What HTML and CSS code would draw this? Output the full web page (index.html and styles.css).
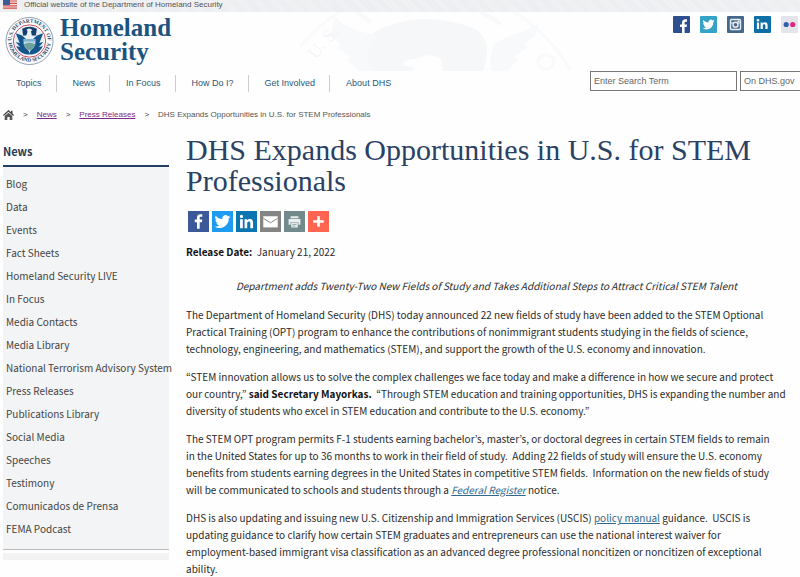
FILE: index.html
```
<!DOCTYPE html>
<html lang="en">
<head>
    <meta charset="UTF-8">
    <meta name="viewport" content="width=device-width, initial-scale=1.0">
    <title>DHS Expands Opportunities in U.S. for STEM Professionals</title>
    <link rel="stylesheet" href="styles.css">
</head>
<body>

<div class="gov-banner">
    <svg class="flag" viewBox="0 0 14 10">
        <rect width="14" height="10" fill="#f3e3e3"/>
        <path d="M0 1h14M0 3.4h14M0 5.8h14M0 8.2h14" stroke="#d4504f" stroke-width="1.2"/>
        <rect width="7" height="5" fill="#3c5a96"/>
    </svg>
    <span>Official website of the Department of Homeland Security</span>
</div>

<header class="header">
    <svg class="watermark" viewBox="0 0 280 59">
        <circle cx="127" cy="140" r="165" fill="none" stroke="#f9fafc" stroke-width="3"/>
        <path d="M71 59C60 42 64 25 80 17q46-20 95 0c13 8 15 22 8 42h-40c-1-6-2-8-1-11-10-8-20-4-25-1-8 0-14 2-14 6l11 3-2 3z" fill="#f5f7f9"/>
        <path d="M35 5c10 11 24 14 42 19l-6 8c-5 9-4 18 3 27H60l-12-10 2-5-12-8 3-4-13-10 4-3z" fill="#f7f9fb"/>
        <path d="M238 12c-12 8-30 11-43 19-5 9-5 19-4 28h17l9-11-2-4 12-8-2-4 11-9z" fill="#f7f9fb"/>
        <path d="M56 0l15 10M181 0l20 12" stroke="#f8f9fa" stroke-width="4"/>
        <text x="16" y="48" transform="rotate(-50 16 48)" class="watermark-text">U. S.</text>
        <ellipse cx="246" cy="50" rx="8" ry="7" fill="none" stroke="#f8f9fb" stroke-width="3"/>
    </svg>

    <div class="header-top">
        <a href="#" class="brand">
            <svg class="seal" viewBox="0 0 100 100">
                <defs>
                    <path id="ringTop" d="M14.500 60A37 37 0 1 1 85.500 60"/>
                    <path id="ringBottom" d="M7.500 58A43.500 43.500 0 0 0 92.500 58"/>
                </defs>
                <circle cx="50" cy="50" r="48" fill="#fff" stroke="#8a9bb0" stroke-width="2"/>
                <text class="seal-text"><textPath href="#ringTop" startOffset="50%" text-anchor="middle">U.S. DEPARTMENT OF</textPath></text>
                <text class="seal-text"><textPath href="#ringBottom" startOffset="50%" text-anchor="middle">HOMELAND SECURITY</textPath></text>
                <circle cx="50" cy="50" r="33" fill="#fff" stroke="#c4475a" stroke-width="2"/>
                <circle cx="50" cy="50" r="30" fill="#e6eef5"/>
                <path d="M35 25q15-8 30 0l-2 14H37z" fill="#123f70"/>
                <path d="M22 34l13 5 10 9v14l6 15c-13 2-24-6-28-17l8 3-9-11 8 2z" fill="#14558c"/>
                <path d="M78 34l-13 5-10 9v14l-6 15c13 2 24-6 28-17l-8 3 9-11-8 2z" fill="#14558c"/>
                <path d="M44 27q6-5 12 1l-3 2 2 10H43l3-9z" fill="#e8f1f7"/>
                <path d="M38 46h24v10q-2 9-12 14-10-5-12-14z" fill="#b9d8e4"/>
                <path d="M38 57q12-7 24 0-3 8-12 12-9-4-12-12z" fill="#6f9f9b"/>
                <path d="M38 46h24v5H38z" fill="#7fb2d2"/>
            </svg>
            <span class="brand-name">Homeland<br>Security</span>
        </a>

        <div class="social">
            <a href="#" aria-label="Facebook">
                <svg viewBox="0 0 17 17"><rect width="17" height="17" rx="1" fill="#2d4f8e"/><path d="M9 17v-6H7V8.500h2V7c0-2.500 1.300-3.700 3.500-3.700H14v2.500h-1.100c-1 0-1.300.4-1.300 1.200v1.500H14L13.600 11h-2v6z" fill="#fff"/></svg>
            </a>
            <a href="#" aria-label="Twitter">
                <svg viewBox="0 0 17 17"><rect width="17" height="17" rx="1" fill="#35a3c8"/><path transform="translate(2.500 2.500) scale(.5)" d="M23.950 4.570a10 10 0 0 1-2.820.770 4.960 4.960 0 0 0 2.160-2.720c-.95.550-2 .960-3.130 1.180a4.920 4.920 0 0 0-8.380 4.480C7.690 8.090 4.070 6.130 1.640 3.160a4.920 4.920 0 0 0 1.520 6.570 4.900 4.900 0 0 1-2.230-.610v.060a4.920 4.920 0 0 0 3.950 4.830 5 5 0 0 1-2.210.080 4.940 4.940 0 0 0 4.600 3.420A9.870 9.870 0 0 1 0 19.540a14 14 0 0 0 7.550 2.210c9.050 0 14-7.500 14-13.980l-.02-.63a9.940 9.940 0 0 0 2.420-2.570z" fill="#fff"/></svg>
            </a>
            <a href="#" aria-label="Instagram">
                <svg viewBox="0 0 17 17"><rect width="17" height="17" rx="1" fill="#45698c"/><rect x="3.500" y="3.500" width="10" height="10" rx="1" fill="none" stroke="#e8eef4" stroke-width="1.400"/><path d="M3.500 7h3M10.500 7h3" stroke="#e8eef4"/><circle cx="8.500" cy="8.700" r="2.500" fill="#45698c" stroke="#e8eef4" stroke-width="1.400"/><rect x="10.500" y="4.500" width="2" height="2" fill="#e8eef4"/></svg>
            </a>
            <a href="#" aria-label="LinkedIn">
                <svg viewBox="0 0 17 17"><rect width="17" height="17" rx="1" fill="#0d6fa5"/><circle cx="4" cy="4.200" r="1.300" fill="#fff"/><path d="M2.900 6.500h2.200V13H2.900zM6.600 6.500h2.100v.9c.5-.7 1.200-1.100 2.200-1.100 2 0 2.700 1.200 2.700 3.200V13h-2.200V9.900c0-1-.2-1.700-1.200-1.700s-1.400.7-1.400 1.700V13H6.600z" fill="#fff"/></svg>
            </a>
            <a href="#" aria-label="Flickr">
                <svg viewBox="0 0 17 17"><rect width="17" height="17" rx="1" fill="#e4e5ea"/><circle cx="5.200" cy="8.500" r="2.600" fill="#2d5fae"/><circle cx="11.700" cy="8.500" r="2.600" fill="#e0267c"/></svg>
            </a>
        </div>
    </div>

    <div class="header-bottom">
        <nav class="nav-links">
            <a href="#" class="nav-link">Topics</a>
            <a href="#" class="nav-link">News</a>
            <a href="#" class="nav-link">In Focus</a>
            <a href="#" class="nav-link">How Do I?</a>
            <a href="#" class="nav-link">Get Involved</a>
            <a href="#" class="nav-link">About DHS</a>
        </nav>
        <form class="search">
            <input type="text" class="search-input" placeholder="Enter Search Term" aria-label="Enter Search Term">
            <select class="search-scope" aria-label="Search scope">
                <option>On DHS.gov</option>
            </select>
        </form>
    </div>
</header>

<nav class="breadcrumb" aria-label="Breadcrumb">
    <a href="#" class="home" aria-label="Home">
        <svg viewBox="0 0 11 10"><path d="M5.500 0L0 5l.8.900 4.700-4.200 4.700 4.200L11 5 9.500 3.600V.8H8v1.500z" fill="#444"/><path d="M5.500 2.700L1.700 6v4h2.600V7h2.400v3h2.600V6z" fill="#555"/></svg>
    </a>
    <span class="arrow">&gt;</span>
    <a href="#">News</a>
    <span class="arrow">&gt;</span>
    <a href="#">Press Releases</a>
    <span class="arrow">&gt;</span>
    <span>DHS Expands Opportunities in U.S. for STEM Professionals</span>
</nav>

<div class="page">
    <aside class="sidebar">
        <h2>News</h2>
        <ul class="side-menu">
            <li><a href="#">Blog</a></li>
            <li><a href="#">Data</a></li>
            <li><a href="#">Events</a></li>
            <li><a href="#">Fact Sheets</a></li>
            <li><a href="#">Homeland Security LIVE</a></li>
            <li><a href="#">In Focus</a></li>
            <li><a href="#">Media Contacts</a></li>
            <li><a href="#">Media Library</a></li>
            <li><a href="#">National Terrorism Advisory System</a></li>
            <li><a href="#">Press Releases</a></li>
            <li><a href="#">Publications Library</a></li>
            <li><a href="#">Social Media</a></li>
            <li><a href="#">Speeches</a></li>
            <li><a href="#">Testimony</a></li>
            <li><a href="#">Comunicados de Prensa</a></li>
            <li><a href="#">FEMA Podcast</a></li>
        </ul>
        <div class="side-footer"></div>
    </aside>

    <main class="article">
        <h1>DHS Expands Opportunities in U.S. for STEM Professionals</h1>

        <div class="share">
            <a href="#" class="facebook" aria-label="Share on Facebook">
                <svg viewBox="0 0 32 32"><path d="M17.800 27V17h3.400l.5-4h-3.900v-2.500c0-1.100.3-1.900 2-1.900h2V5.200c-.4 0-1.600-.2-3-.2-3 0-5.100 1.800-5.100 5.200V13h-3.400v4h3.400v10z" fill="#fff"/></svg>
            </a>
            <a href="#" class="twitter" aria-label="Share on Twitter">
                <svg viewBox="0 0 32 32"><path d="M28 8.600a9.900 9.900 0 0 1-2.800.8 4.900 4.900 0 0 0 2.100-2.700c-.9.500-2 1-3.100 1.200a4.900 4.900 0 0 0-8.400 4.500c-4.100-.2-7.700-2.200-10.100-5.200a4.900 4.900 0 0 0 1.500 6.600c-.8 0-1.600-.2-2.200-.6v.1a4.900 4.900 0 0 0 4 4.800 4.900 4.900 0 0 1-2.300.1 4.900 4.900 0 0 0 4.600 3.400A9.900 9.900 0 0 1 4 23.600a13.900 13.900 0 0 0 21.500-12.400A10 10 0 0 0 28 8.600z" fill="#fff"/></svg>
            </a>
            <a href="#" class="linkedin" aria-label="Share on LinkedIn">
                <svg viewBox="0 0 32 32"><path d="M6.200 12.600h4.200v13.500H6.200zM8.300 5.900a2.400 2.400 0 1 1 0 4.900 2.400 2.400 0 0 1 0-4.900M13 12.600h4v1.900c.6-1.100 2-2.200 4-2.200 4.200 0 5 2.800 5 6.400v7.400h-4.200v-6.600c0-1.500 0-3.500-2.200-3.500s-2.500 1.700-2.500 3.400v6.700H13z" fill="#fff"/></svg>
            </a>
            <a href="#" class="email" aria-label="Email">
                <svg viewBox="0 0 32 32"><path d="M5 8h22v17H5z" fill="#fff"/><path d="M5 11l11 7 11-7" fill="none" stroke="#848484" stroke-width="1.500"/></svg>
            </a>
            <a href="#" class="print" aria-label="Print">
                <svg viewBox="0 0 32 32"><path d="M10 8h12v3H10zM7 12h18v9h-3v-4H10v4H7zM11 18h10v7H11z" fill="#e9eeee"/><path d="M13 20.500h6M13 23h4" stroke="#738a8d"/></svg>
            </a>
            <a href="#" class="more" aria-label="More">
                <svg viewBox="0 0 32 32"><path d="M14 8h4v6h6v4h-6v6h-4v-6H8v-4h6z" fill="#fff"/></svg>
            </a>
        </div>

        <p class="release-date"><strong>Release Date:</strong> &nbsp;January 21, 2022</p>

        <p class="subtitle"><em>Department adds Twenty-Two New Fields of Study and Takes Additional Steps to Attract Critical STEM Talent</em></p>

        <p>The Department of Homeland Security (DHS) today announced 22 new fields of study have been added to the STEM Optional Practical Training (OPT) program to enhance the contributions of nonimmigrant students studying in the fields of science, technology, engineering, and mathematics (STEM), and support the growth of the U.S. economy and innovation.</p>

        <p>“STEM innovation allows us to solve the complex challenges we face today and make a difference in how we secure and protect our country,” <strong>said Secretary Mayorkas.</strong>&nbsp; “Through STEM education and training opportunities, DHS is expanding the number and diversity of students who excel in STEM education and contribute to the U.S. economy.”</p>

        <p>The STEM OPT program permits F-1 students earning bachelor’s, master’s, or doctoral degrees in certain STEM fields to remain in&nbsp;the United States for up to 36 months to work in their field of study.&nbsp; Adding 22 fields of study will ensure the U.S. economy benefits from students earning degrees in the United States in competitive STEM fields.&nbsp; Information on the new fields of study will be communicated to schools and students through a <a href="#"><em>Federal Register</em></a> notice.</p>

        <p>DHS is also updating and issuing new U.S. Citizenship and Immigration Services (USCIS) <a href="#">policy manual</a> guidance.&nbsp; USCIS is updating guidance to clarify how certain STEM graduates and entrepreneurs can use the national interest waiver for <span class="nowrap">employment-based</span> immigrant visa classification as an advanced degree professional noncitizen or noncitizen of exceptional ability.</p>
    </main>
</div>

</body>
</html>
```
FILE: styles.css
```
* {
    box-sizing: border-box;
}

body {
    margin: 0;
    background-color: #fefefe;
    color: #2b2b2b;
    font-family: "Noto Sans CJK KR", "Open Sans", sans-serif;
    font-size: 10px;
    line-height: 17px;
    overflow-x: hidden;
}

svg {
    display: block;
}

.gov-banner {
    display: flex;
    align-items: flex-start;
    gap: 7px;
    height: 12px;
    padding-left: 3px;
    background: repeating-linear-gradient(45deg, #f2f3f5 0, #f2f3f5 1px, #eaecef 1px, #eaecef 2px);
    color: #555;
    font-family: "Liberation Sans", Arial, sans-serif;
    font-size: 8px;
    line-height: 9px;
}

.flag {
    width: 14px;
    height: 10px;
}

/* Header */
.header {
    position: relative;
    font-family: "Liberation Sans", Arial, sans-serif;
}

.watermark {
    position: absolute;
    top: 0;
    left: 300px;
    z-index: -1;
    width: 280px;
    height: 59px;
}

.watermark-text {
    font-family: "Liberation Serif", serif;
    font-size: 18px;
    fill: #f4f5f8;
}

.header-top {
    display: flex;
    justify-content: space-between;
    align-items: flex-start;
    height: 59px;
    padding: 4px 2px 0 5px;
}

.brand {
    display: flex;
    gap: 6px;
    color: #1b5480;
    text-decoration: none;
}

.seal {
    width: 49px;
    height: 50px;
}

.seal-text {
    font-family: "Liberation Serif", serif;
    font-size: 11px;
    font-weight: bold;
    fill: #24486f;
}

.brand-name {
    font-family: "Liberation Serif", serif;
    font-size: 25px;
    font-weight: bold;
    line-height: 24px;
}

.social {
    display: flex;
    gap: 10px;
}

.social svg {
    width: 17px;
    height: 17px;
}

.header-bottom {
    display: flex;
    justify-content: space-between;
    height: 24px;
}

.nav-links {
    display: flex;
    align-items: center;
}

.nav-link {
    padding: 0 14px 0 16px;
    border-right: 1px solid #ccc;
    color: #2c5878;
    font-size: 9px;
    line-height: 17px;
    text-decoration: none;
}

.nav-link:last-child {
    border-right: none;
}

.nav-link:hover {
    text-decoration: underline;
}

.search {
    display: flex;
    gap: 3px;
    margin-right: -10px;
}

.search-input,
.search-scope {
    height: 20px;
    padding: 0 3px;
    border: 1px solid #777;
    border-radius: 0;
    background-color: #fff;
    color: #666;
    font-family: "Liberation Sans", Arial, sans-serif;
    font-size: 9px;
}

.search-input {
    width: 147px;
}

.search-input::placeholder {
    color: #666;
}

.search-scope {
    width: 70px;
    appearance: none;
}

.breadcrumb {
    display: flex;
    align-items: center;
    gap: 9px;
    height: 39px;
    padding-left: 3px;
    color: #555;
    font-family: "Liberation Sans", Arial, sans-serif;
    font-size: 8px;
}

.breadcrumb a {
    color: #7a2a85;
}

.home svg {
    width: 11px;
    height: 10px;
}

.arrow {
    color: #333;
}

/* Page */
.page {
    display: flex;
    gap: 17px;
    padding: 0 13px 0 3px;
}

.sidebar {
    flex: none;
    width: 166px;
    padding-top: 8px;
}

.sidebar h2 {
    margin: 0;
    padding-bottom: 5px;
    border-bottom: 2px solid #253f63;
    color: #253a55;
    font-size: 11px;
    line-height: 18px;
}

.side-menu {
    margin: 0;
    padding: 5px 3px 9px;
    border-bottom: 1px solid #bbb;
    background-color: #f3f4f5;
    list-style: none;
}

.side-menu a {
    color: #444;
    line-height: 23px;
    text-decoration: none;
    white-space: nowrap;
}

.side-menu li {
    height: 23px;
}

.side-menu a:hover {
    text-decoration: underline;
}

.side-footer {
    height: 7px;
    margin-top: 3px;
    background-color: #f3f3f4;
}

.article {
    flex: 1;
    min-width: 0;
}

.article h1 {
    margin: 0;
    color: #2a4163;
    font-family: "Liberation Serif", serif;
    font-size: 30px;
    font-weight: normal;
    line-height: 31px;
}

.share {
    display: flex;
    gap: 3px;
    margin-top: 15px;
    padding-left: 2px;
}

.share svg {
    width: 21px;
    height: 21px;
}

.facebook {
    background-color: #3b5998;
}

.twitter {
    background-color: #1d9bf0;
}

.linkedin {
    background-color: #0a75b1;
}

.email {
    background-color: #848484;
}

.print {
    background-color: #738a8d;
}

.more {
    background-color: #ff6550;
}

.article p {
    margin: 11px 0;
}

.article strong {
    color: #111;
}

.article p a {
    color: #32688e;
}

.article .release-date {
    margin-bottom: 17px;
}

.article .subtitle {
    margin-bottom: 12px;
    text-align: center;
}

.nowrap {
    white-space: nowrap;
}
```
